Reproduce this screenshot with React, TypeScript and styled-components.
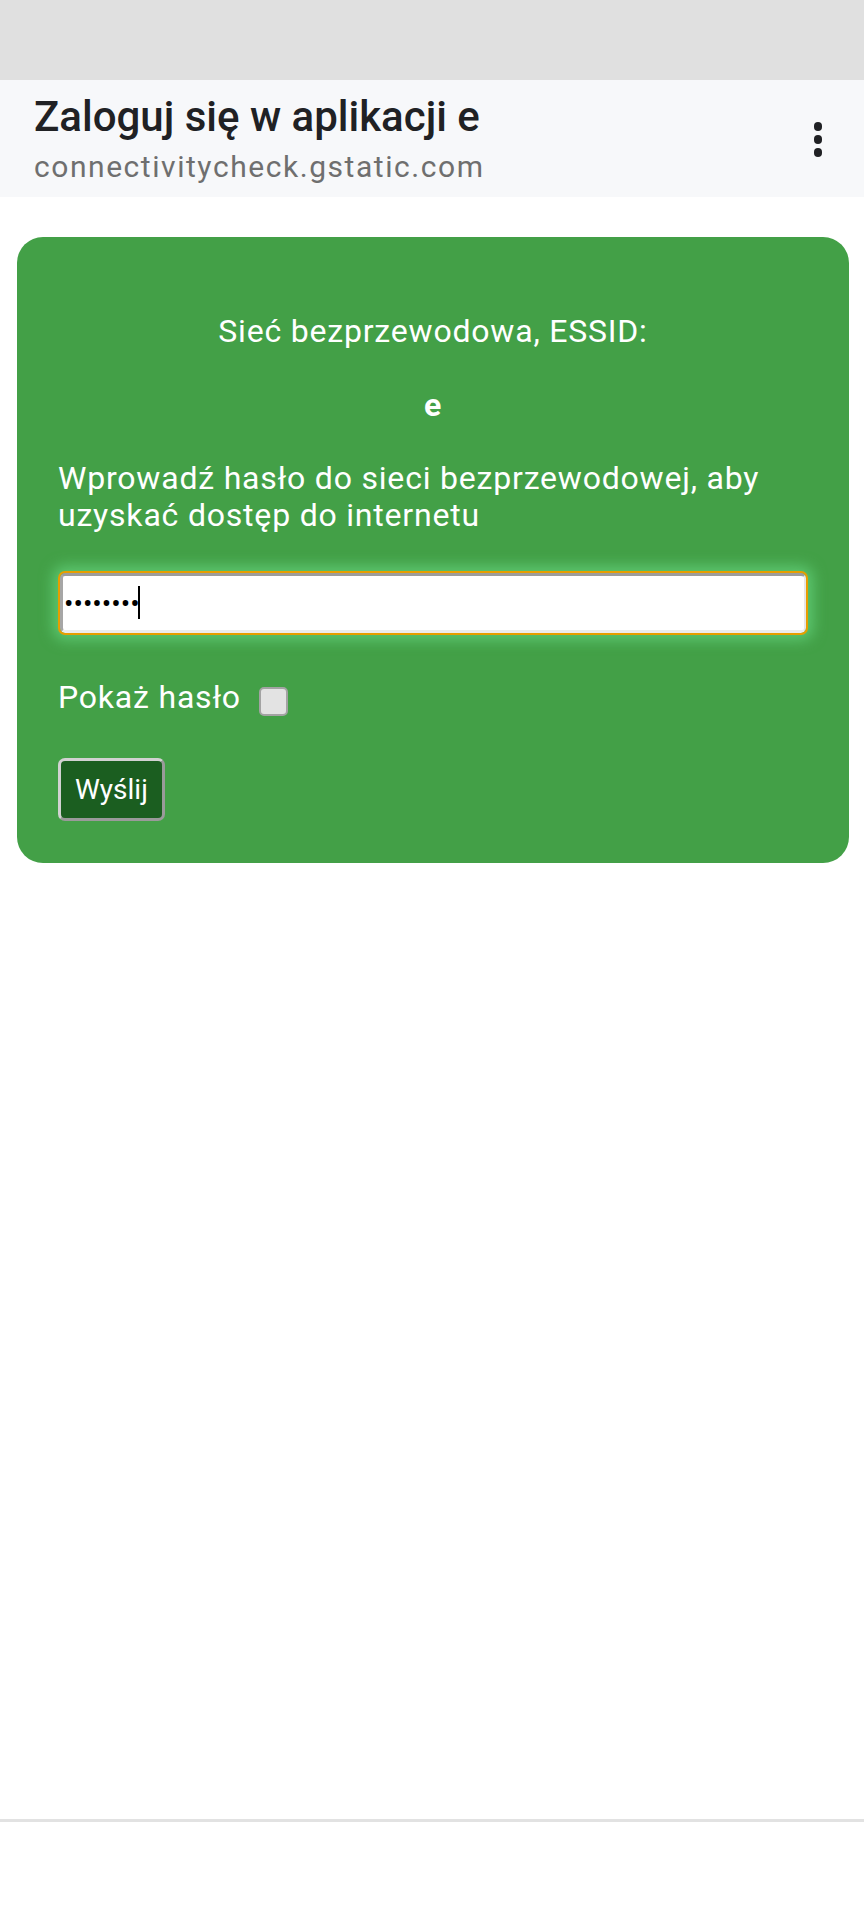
import React from 'react';
import styled, { createGlobalStyle } from 'styled-components';

const Green = '#43a047';

const GlobalStyle = createGlobalStyle`
  html, body {
    margin: 0;
    padding: 0;
    background: #ffffff;
    font-family: Roboto, "Liberation Sans", Arial, sans-serif;
  }
`;

const Page = styled.div`
  min-height: 1920px;
  display: flex;
  flex-direction: column;
`;

const StatusBar = styled.div`
  height: 80px;
  background: #e0e0e0;
`;

const Header = styled.header`
  height: 117px;
  box-sizing: border-box;
  background: #f7f8fa;
  display: flex;
  align-items: center;
  justify-content: space-between;
  padding: 0 42px 0 34px;
`;

const TitleBlock = styled.div`
  display: flex;
  flex-direction: column;
  gap: 6px;
`;

const Title = styled.div`
  font-size: 42px;
  line-height: 50px;
  font-weight: 500;
  color: #202124;
`;

const Url = styled.div`
  font-size: 30px;
  line-height: 37px;
  letter-spacing: 1.55px;
  color: #6f6f6f;
`;

const MenuButton = styled.div`
  display: flex;
  flex-direction: column;
  align-items: center;
  gap: 4.5px;
  margin-top: 2px;
`;

const Dot = styled.span`
  width: 8.5px;
  height: 8.5px;
  border-radius: 50%;
  background: #202124;
`;

const Main = styled.main`
  flex: 1;
  padding: 40px 15px 0 17px;
`;

const Card = styled.section`
  background: ${Green};
  border-radius: 26px;
  padding: 76px 41px 42px 41px;
  color: #ffffff;
  font-size: 32px;
  line-height: 37px;
  letter-spacing: 0.8px;
`;

const Centered = styled.div<{ $bold?: boolean; $gap: number }>`
  text-align: center;
  font-weight: ${({ $bold }) => ($bold ? 700 : 400)};
  margin-bottom: ${({ $gap }) => $gap}px;
`;

const Prompt = styled.p`
  margin: 0 0 39px 0;
`;

const InputWrap = styled.div`
  position: relative;
`;

const PasswordInput = styled.input`
  display: block;
  box-sizing: border-box;
  width: calc(100% - 4px);
  height: 60px;
  margin: 0 2px;
  padding: 0 0 0 1px;
  background: #ffffff;
  border-style: solid;
  border-width: 3px 2px 3px 3px;
  border-color: #9c9c9c #e6e6e6 #ececec #a6a6a6;
  border-radius: 5px;
  outline: 2px solid #e79e00;
  box-shadow: 0 0 14px 7px rgba(110, 225, 140, 0.6);
  font-family: Roboto, "Liberation Sans", Arial, sans-serif;
  font-size: 28px;
  letter-spacing: 0;
  color: #000000;
`;

const Caret = styled.span`
  position: absolute;
  left: 80px;
  top: 13px;
  width: 2px;
  height: 33px;
  background: #000000;
  pointer-events: none;
`;

const ShowRow = styled.label`
  display: flex;
  align-items: center;
  gap: 18px;
  margin-top: 46px;
`;

const Checkbox = styled.input`
  appearance: none;
  box-sizing: border-box;
  width: 29px;
  height: 29px;
  margin: 8px 0 0 0;
  background: #e3e3e3;
  border: 2px solid #a3a3a3;
  border-radius: 5px;
`;

const SubmitButton = styled.button`
  display: block;
  box-sizing: border-box;
  height: 63px;
  margin-top: 42px;
  padding: 0 14px;
  background: #1b5e20;
  color: #ffffff;
  font-family: Roboto, "Liberation Sans", Arial, sans-serif;
  font-size: 28px;
  letter-spacing: 0;
  border-style: solid;
  border-width: 3px;
  border-color: #d2d2d2 #9a9a9a #9a9a9a #d2d2d2;
  border-radius: 7px;
`;

const BottomBar = styled.div`
  height: 98px;
  border-top: 3px solid #e2e2e2;
  background: #ffffff;
`;

function App() {
  return (
    <Page>
      <GlobalStyle />
      <StatusBar />
      <Header>
        <TitleBlock>
          <Title>Zaloguj się w aplikacji e</Title>
          <Url>connectivitycheck.gstatic.com</Url>
        </TitleBlock>
        <MenuButton>
          <Dot />
          <Dot />
          <Dot />
        </MenuButton>
      </Header>
      <Main>
        <Card>
          <Centered $gap={37}>Sieć bezprzewodowa, ESSID:</Centered>
          <Centered $bold $gap={36}>e</Centered>
          <Prompt>Wprowadź hasło do sieci bezprzewodowej, aby uzyskać dostęp do internetu</Prompt>
          <InputWrap>
            <PasswordInput type="password" defaultValue="12345678" />
            <Caret />
          </InputWrap>
          <ShowRow>
            Pokaż hasło
            <Checkbox type="checkbox" />
          </ShowRow>
          <SubmitButton type="button">Wyślij</SubmitButton>
        </Card>
      </Main>
      <BottomBar />
    </Page>
  );
}

export default App;
